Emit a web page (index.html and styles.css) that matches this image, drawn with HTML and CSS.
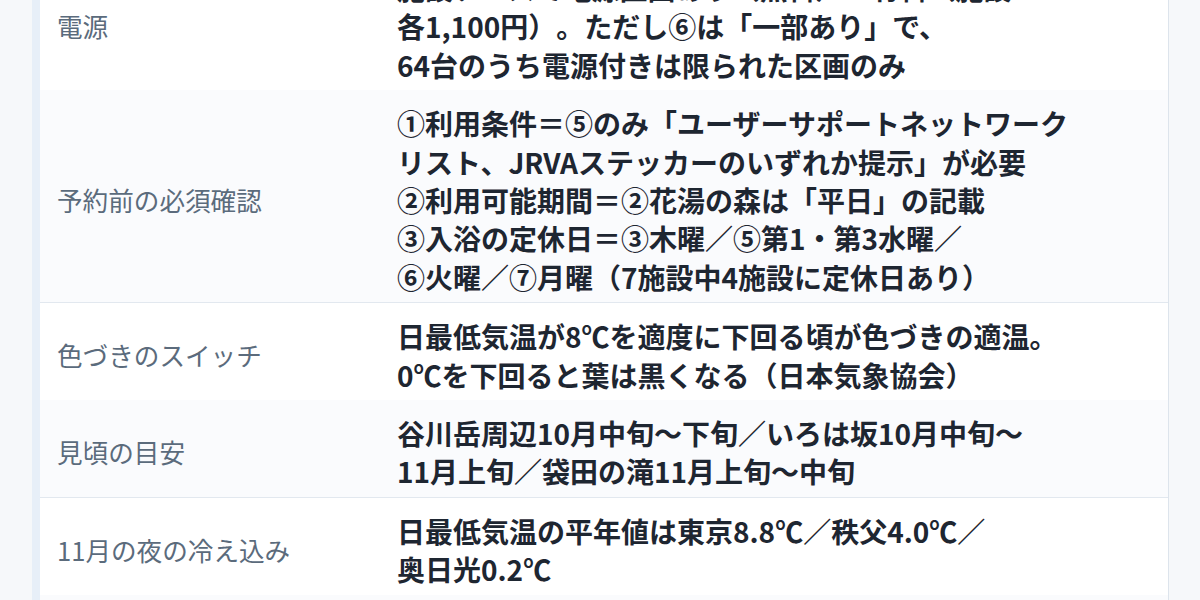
FILE: index.html
```html
<!DOCTYPE html>
<html lang="ja">
<head>
<meta charset="utf-8">
<title>紅葉車中泊ガイド</title>
<link rel="stylesheet" href="styles.css">
</head>
<body>
<div class="page">
  <div class="table">
    <div class="row">
      <div class="label">電源</div>
      <div class="value">施設ナースで電源区画あり（無料）・有料（施設<br>各1,100円）。ただし⑥は「一部あり」で、<br>64台のうち電源付きは限られた区画のみ</div>
    </div>
    <div class="row alt">
      <div class="label">予約前の必須確認</div>
      <div class="value">①利用条件＝⑤のみ「ユーザーサポートネットワーク<br>リスト、JRVAステッカーのいずれか提示」が必要<br>②利用可能期間＝②花湯の森は「平日」の記載<br>③入浴の定休日＝③木曜／⑤第1・第3水曜／<br>⑥火曜／⑦月曜（7施設中4施設に定休日あり）</div>
    </div>
    <div class="row">
      <div class="label">色づきのスイッチ</div>
      <div class="value">日最低気温が8℃を適度に下回る頃が色づきの適温。<br>0℃を下回ると葉は黒くなる（日本気象協会）</div>
    </div>
    <div class="row alt">
      <div class="label">見頃の目安</div>
      <div class="value">谷川岳周辺10月中旬〜下旬／いろは坂10月中旬〜<br>11月上旬／袋田の滝11月上旬〜中旬</div>
    </div>
    <div class="row">
      <div class="label">11月の夜の冷え込み</div>
      <div class="value">日最低気温の平年値は東京8.8℃／秩父4.0℃／<br>奥日光0.2℃</div>
    </div>
    <div class="row alt">
      <div class="label">服装</div>
      <div class="value">防寒着と寝袋を用意</div>
    </div>
  </div>
</div>
</body>
</html>
```

FILE: styles.css
```css
html, body {
  margin: 0;
  padding: 0;
  background: #f6f8fa;
}
body {
  font-family: "Noto Sans CJK JP", "Noto Sans", sans-serif;
  overflow: hidden;
  text-spacing-trim: space-all;
}
.page {
  padding-left: 32px;
  width: 1137px;
  margin-top: -45px;
}
.table {
  border-left: 8px solid #e7eff8;
  border-right: 1px solid #dde4ec;
  background: #ffffff;
}
.row {
  display: grid;
  grid-template-columns: 340px 1fr;
  align-items: center;
  padding: 14px 0 6px;
  background: #ffffff;
}
.row.alt {
  background: #fafbfd;
  border-bottom: 1px solid #e2e8ef;
}
.label {
  padding-left: 17px;
  font-size: 25.6px;
  line-height: 38.4px;
  color: #5b6b7c;
  font-weight: 400;
}
.value {
  padding-left: 17px;
  max-width: 720px;
  font-size: 28px;
  line-height: 38.4px;
  color: #1e2631;
  font-weight: 700;
}
```
